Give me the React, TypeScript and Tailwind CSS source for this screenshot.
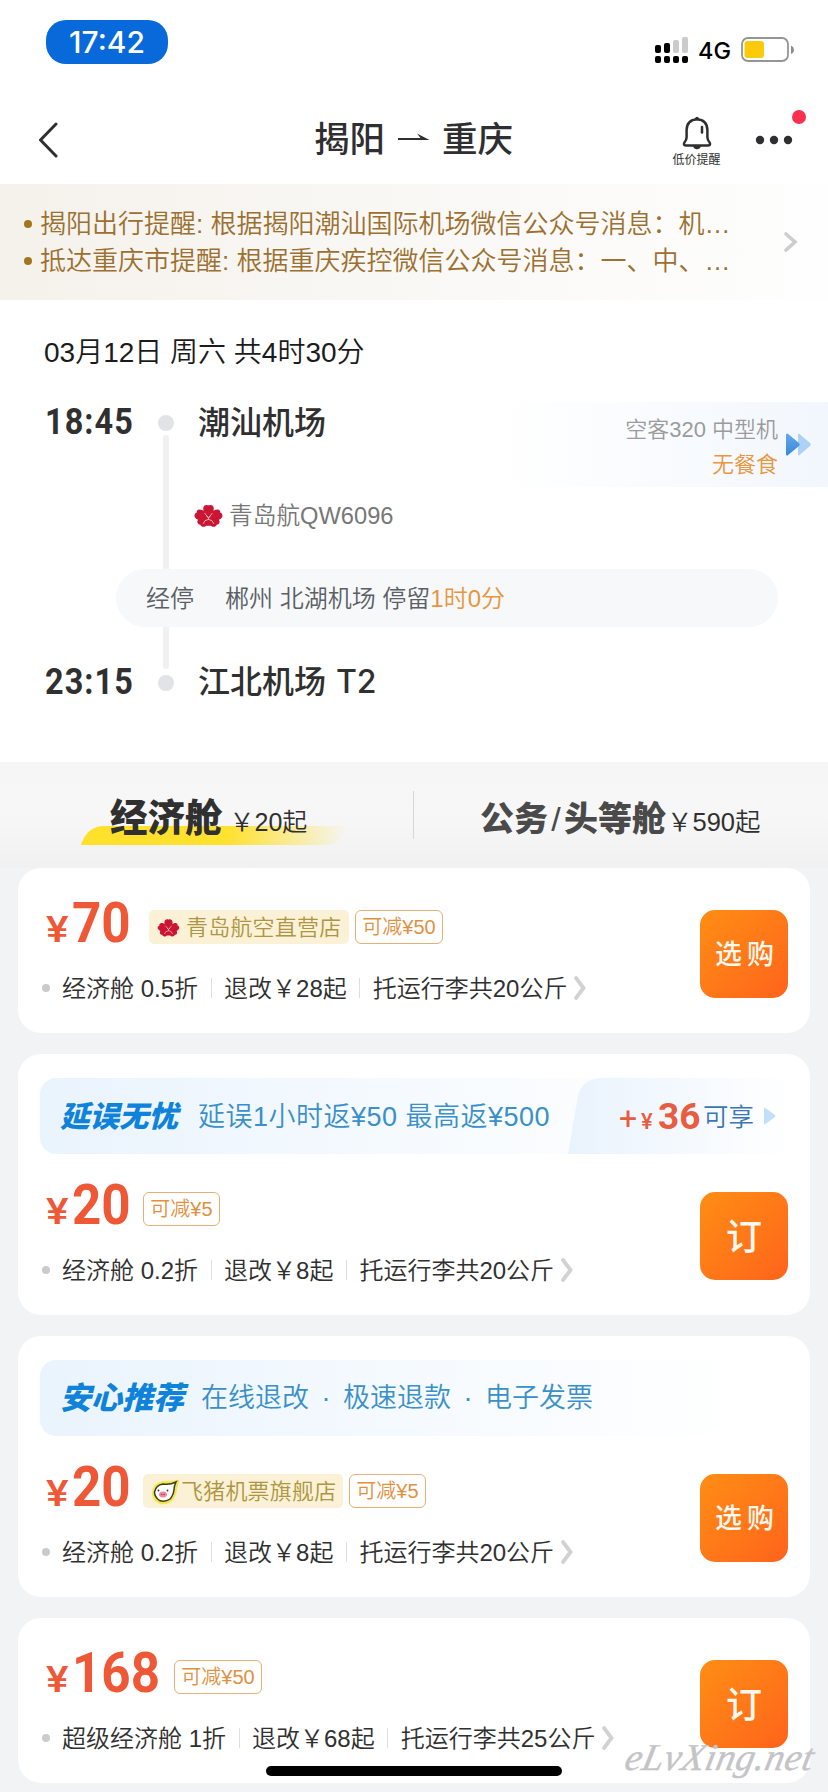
import React from "react";

const sans = "font-['Liberation_Sans','Noto_Sans_CJK_SC',sans-serif]";
const digits = "font-['Roboto','Noto_Sans_CJK_SC',sans-serif] font-bold";

function Petals({ className }: { className: string }) {
  return (
    <svg viewBox="0 0 30 24" className={className}>
      <g fill="#cb1535">
        <path d="M15 13C9.500 9 8.500 4 10.500 1.500C12 .2 14 .3 15 1C16 .3 18 .2 19.500 1.500C21.500 4 20.500 9 15 13Z" />
        <path d="M14 15C13.500 8 8 4.500 4.500 5.500C2.800 6.200 2.600 7.600 3 8.500C1 9 0 11 .8 13C2.500 16.500 9 18 14 15Z" />
        <path d="M16 15C16.500 8 22 4.500 25.500 5.500C27.200 6.200 27.400 7.600 27 8.500C29 9 30 11 29.200 13C27.500 16.500 21 18 16 15Z" />
        <path d="M14.800 13C9 12.500 3 14 3.500 18.500C4 20.500 5.500 21 6.500 21C7.500 23.300 9.500 23.800 12 22.500C14.500 20.500 15 17 14.800 13Z" />
        <path d="M15.200 13C21 12.500 27 14 26.500 18.500C26 20.500 24.500 21 23.500 21C22.500 23.300 20.500 23.800 18 22.500C15.500 20.500 15 17 15.200 13Z" />
        <rect x="8" y="6" width="14" height="16" rx="4" />
      </g>
      <path
        d="M15 14L11 9M15 14L19 9M15 14V16M9.500 20Q10.500 16 15 15.500Q19.500 16 20.500 20M13 12L15 14L17 12"
        fill="none"
        stroke="#f8c4b4"
        strokeWidth="0.9"
      />
    </svg>
  );
}

function Pig({ className }: { className: string }) {
  return (
    <svg viewBox="0 0 30 26" className={className}>
      <path d="M13 2Q21 2.500 28.500 .5Q27 6 26 10Q25 18 21 22Q16 26 9 25Q1 22 1 14Q2 3 13 2Z" fill="#f3e64e" />
      <path
        d="M12 5Q19 6 25 3Q23 7 23 11Q22 17 19 20Q14 23.500 8.500 21.500Q3.500 18 3.500 13Q5 6 12 5Z"
        fill="#fff"
        stroke="#3c3a22"
        strokeWidth="1.500"
      />
      <ellipse cx="12" cy="15.500" rx="4" ry="3" fill="#f08a9b" />
      <circle cx="10.800" cy="15.500" r=".8" fill="#b03050" />
      <circle cx="13.200" cy="15.500" r=".8" fill="#b03050" />
      <circle cx="7.500" cy="11.500" r=".9" fill="#333" />
      <circle cx="16.500" cy="11.500" r=".9" fill="#333" />
    </svg>
  );
}

function StatusBar() {
  return (
    <div className="flex h-[92px] items-start pl-[46px] pr-[34px]">
      <div className="mt-5 flex h-11 w-[122px] items-center justify-center rounded-[20px] bg-[#0769da] font-['Inter',sans-serif] text-[30px] font-medium leading-none text-white">
        17:42
      </div>
      <div className="ml-auto mt-[37px] flex items-start">
        <svg width="34" height="26" viewBox="0 0 34 26">
          <rect x="0" y="8" width="6" height="8" rx="2" />
          <rect x="9" y="6" width="6" height="10" rx="2" />
          <rect x="18" y="3" width="6" height="13" rx="2" fill="#cbcbcb" />
          <rect x="27" y="0" width="6" height="16" rx="2" fill="#cbcbcb" />
          <rect x="0" y="19" width="6" height="7" rx="2" />
          <rect x="9" y="19" width="6" height="7" rx="2" />
          <rect x="18" y="19" width="6" height="7" rx="2" />
          <rect x="27" y="19" width="6" height="7" rx="2" />
        </svg>
        <span className="ml-[9px] mt-[3px] w-[43px] font-['Inter',sans-serif] text-[23.500px] font-medium leading-[22px] text-black">4G</span>
        <svg width="53" height="26" viewBox="0 0 53 26">
          <rect x="1" y="1" width="46" height="23" rx="6" fill="none" stroke="#959595" strokeWidth="1.800" />
          <rect x="3.500" y="4" width="19.500" height="17" rx="3" fill="#fbcb0a" />
          <path d="M50 8.500Q53 10 53 12.500Q53 15.500 50 17Z" fill="#8c8c8c" />
        </svg>
      </div>
    </div>
  );
}

function NavBar() {
  return (
    <div className="flex h-[92px] items-start text-[#2f2f31]">
      <svg width="20" height="36" viewBox="0 0 20 36" className="ml-[38px] mt-[30px]">
        <path d="M18 2L2.500 18L18 34" fill="none" stroke="currentColor" strokeWidth="3" strokeLinecap="round" strokeLinejoin="round" />
      </svg>
      <h1 className={`${sans} ml-[256px] mt-[29px] flex h-10 w-[199px] items-center text-[35.500px] font-medium leading-none`}>
        <span>揭阳</span>
        <svg width="32" height="9" viewBox="0 0 32 9" className="mx-[12.500px] mb-[7px] shrink-0">
          <path d="M0 7H31.500L19 .5L22.500 5H0Z" fill="currentColor" />
        </svg>
        <span>重庆</span>
      </h1>
      <div className="ml-[159px] mt-6 flex w-[49px] flex-col items-center">
        <svg width="30" height="34" viewBox="0 0 30 34">
          <path
            d="M15 3.200Q4.800 4 4.600 14V21.500Q4.500 24 2.400 26.500Q1 29.300 3.800 29.500H26.200Q29 29.300 27.600 26.500Q25.500 24 25.400 21.500V14Q25.200 4 15 3.200Z"
            fill="none"
            stroke="currentColor"
            strokeWidth="2.500"
          />
          <path d="M12.500 3Q15 -1.500 17.500 3Z" fill="currentColor" />
          <path d="M11 30H19Q18 33.300 15 33.300Q12 33.300 11 30Z" fill="currentColor" />
          <path d="M20 11V16.500" stroke="currentColor" strokeWidth="2.500" strokeLinecap="round" />
        </svg>
        <span className={`${sans} mt-[3px] whitespace-nowrap text-[12px] leading-[14px]`}>低价提醒</span>
      </div>
      <svg width="52" height="42" viewBox="0 0 52 42" className="ml-[34px] mt-[17px]">
        <g fill="currentColor">
          <circle cx="5" cy="31" r="4.200" />
          <circle cx="19" cy="31" r="4.200" />
          <circle cx="33" cy="31" r="4.200" />
        </g>
        <circle cx="44" cy="8" r="7" fill="#f9304f" />
      </svg>
    </div>
  );
}

function Notice() {
  const lines = ["揭阳出行提醒: 根据揭阳潮汕国际机场微信公众号消息：机…", "抵达重庆市提醒: 根据重庆疾控微信公众号消息：一、中、…"];
  return (
    <div className={`${sans} flex h-[116px] items-center bg-linear-to-r from-[#f5f2ec] to-[#fefefe] text-[26px] font-[350] text-[#9b7030]`}>
      <ul className="flex w-[780px] flex-col pl-6 pt-px">
        {lines.map((line) => (
          <li key={line} className="flex h-[37px] items-center whitespace-nowrap leading-none">
            <span className="mr-2 h-2 w-2 rounded-full bg-[#a4741f]" />
            {line}
          </li>
        ))}
      </ul>
      <svg width="18" height="22" viewBox="0 0 18 22">
        <path d="M6 3L15 11L6 19" fill="none" stroke="#cdcdcd" strokeWidth="3.600" strokeLinecap="round" />
      </svg>
    </div>
  );
}

function Flight() {
  return (
    <section className={`${sans} h-[462px] font-[350] leading-none`}>
      <div className="flex h-[102px] items-center whitespace-pre pl-11 pt-[3px] text-[28px] text-[#1b1b1b]">03月12日 周六 共4时30分</div>
      <div className="flex h-[85px] items-stretch">
        <div className={`${digits} ml-[45px] flex h-[39px] w-[113px] items-center text-[36px] text-[#303030]`}>
          <span className="origin-left scale-x-90 tracking-[1.200px]">18:45</span>
        </div>
        <div className="flex w-4 flex-col items-center">
          <span className="mt-[13px] h-4 w-4 rounded-full bg-[#e1e3e7]" />
          <span className="mt-1 w-1.5 grow rounded-t-full bg-[#f1f1f2]" />
        </div>
        <div className="ml-6 flex h-[41px] items-center text-[32px] font-medium text-[#303030]">潮汕机场</div>
        <div className="ml-auto flex w-[330px] items-center justify-end bg-linear-to-r from-white to-[#f2f7fd] pr-[17px] text-[22px]">
          <div className="flex flex-col items-end pt-[5px] text-right">
            <span className="flex h-[35px] items-center whitespace-pre text-[#9b9b9b]">空客320 中型机</span>
            <span className="flex h-[35px] items-center text-[#e8963f]">无餐食</span>
          </div>
          <svg width="25" height="23" viewBox="0 0 25 23" className="ml-[8px]">
            <defs>
              <linearGradient id="fast" x1="0" y1="0" x2="0" y2="1">
                <stop offset="0" stopColor="#65a9ec" />
                <stop offset="1" stopColor="#3987d8" />
              </linearGradient>
            </defs>
            <path d="M12 2Q12 0 13.500 1L24 10Q25.500 11.500 24 13L13.500 22Q12 23 12 21Z" fill="#add1f7" />
            <path d="M0 2Q0 0 1.500 .5L13 10Q14.500 11.500 13 13L1.500 22.500Q0 23 0 21Z" fill="url(#fast)" />
          </svg>
        </div>
      </div>
      <div className="flex h-[82px] items-stretch">
        <span className="ml-[163px] w-1.5 bg-[#f1f1f2]" />
        <div className="ml-[25px] flex h-[57px] items-center text-[23.700px] text-[#777777]">
          <Petals className="mr-[6px] h-6 w-[29px]" />
          <span className="pt-[3px]">青岛航QW6096</span>
        </div>
      </div>
      <div className="ml-[116px] flex h-[58px] w-[662px] items-center whitespace-pre rounded-full bg-[#f6f8fa] pl-[30px] pt-[2px] text-[24px] text-[#5b5f66]">
        <span className="w-[79px]">经停</span>
        <span>郴州 北湖机场 停留</span>
        <span className="text-[#e8963f]">1时0分</span>
      </div>
      <div className="flex h-[135px] items-start">
        <div className={`${digits} ml-[45px] mt-[35px] flex h-[39px] w-[113px] items-center text-[36px] text-[#303030]`}>
          <span className="origin-left scale-x-90 tracking-[1.200px]">23:15</span>
        </div>
        <div className="flex w-4 flex-col items-center">
          <span className="h-[42px] w-1.5 rounded-b-full bg-[#f1f1f2]" />
          <span className="mt-[6px] h-4 w-4 rounded-full bg-[#e1e3e7]" />
        </div>
        <div className="ml-6 mt-[34px] flex h-[41px] items-center whitespace-pre text-[32px] font-medium text-[#303030]">
          江北机场 <span className="ml-px font-['Inter',sans-serif] text-[32px] font-medium">T2</span>
        </div>
      </div>
    </section>
  );
}

function CabinTabs() {
  return (
    <div className={`${sans} flex h-[106px] bg-linear-to-b from-[#f6f6f6] via-[#f7f7f7] to-[#f1f1f2] leading-none`}>
      <div className="relative flex w-[413px] items-start pl-[110px] pt-[35px]">
        <svg width="268" height="20" viewBox="0 0 268 20" className="absolute left-[80px] top-[64px]">
          <defs>
            <linearGradient id="swoosh" x1="0" x2="1">
              <stop offset="0" stopColor="#ffe12b" />
              <stop offset=".55" stopColor="#ffe12f" />
              <stop offset="1" stopColor="#ffe12f" stopOpacity="0" />
            </linearGradient>
          </defs>
          <path d="M1 19Q7 0 24 0H268Q260 19 244 19Z" fill="url(#swoosh)" />
        </svg>
        <span className="relative flex h-[43px] items-center text-[37.500px] font-black text-[#303030]">经济舱</span>
        <span className="relative ml-[7px] flex h-[51px] items-center text-[25px] font-[350] text-[#303030]">￥20起</span>
      </div>
      <span className="mt-[29px] h-12 w-px bg-[#d6d6d6]" />
      <div className="flex items-start pl-[66px] pt-[35px]">
        <span className="flex h-[43px] items-center text-[34px] font-black text-[#4a4a4a]">
          公务<span className="w-4 text-center font-normal">/</span>头等舱
        </span>
        <span className="ml-px flex h-[51px] items-center text-[25.500px] font-[350] text-[#303030]">￥590起</span>
      </div>
    </div>
  );
}

function Tick() {
  return <span className="mx-[12.500px] h-5 w-px bg-[#dedede]" />;
}

type Fare = {
  price: string;
  gap: string;
  shop?: { name: string; icon: React.ReactNode };
  cut: string;
  details: string[];
  action: string;
  banner?: React.ReactNode;
};

function FareCard({ fare }: { fare: Fare }) {
  return (
    <article className="mx-[18px] rounded-[23px] bg-white">
      {fare.banner && <div className="h-24 px-[22px] pt-6">{fare.banner}</div>}
      <div className="flex h-[165px] pl-7 pr-[22px]">
        <div className="flex grow flex-col">
          <div className="flex h-[100px] items-start">
            <div className={`${digits} mt-[25px] flex items-baseline text-[#ef5837]`}>
              <span className="w-[26px] origin-left scale-x-115 text-[37px] font-medium leading-none">¥</span>
              <span className={`origin-left scale-x-93 text-[55px] leading-[60px] ${fare.price.length > 2 ? "w-[94px]" : "w-[60px]"}`}>{fare.price}</span>
            </div>
            <div className={`${fare.gap} mt-[42px] flex gap-1.5 leading-none`}>
              {fare.shop && (
                <div className="flex h-[34px] w-[200px] items-center rounded-[5px] bg-[#fbf1d6] pl-2 pt-px text-[22px] font-[350] tracking-[0.200px] text-[#ac9642]">
                  {fare.shop.icon}
                  {fare.shop.name}
                </div>
              )}
              <div className="flex h-[34px] items-center rounded-[6px] border border-[#e6b077] px-[6.300px] text-[20px] font-[350] text-[#e0913f]">{fare.cut}</div>
            </div>
          </div>
          <div className="flex h-10 items-center whitespace-nowrap text-[24px] font-[350] leading-none text-[#303030]">
            <span className="-ml-1 mr-[12px] h-2 w-2 rounded-full bg-[#cbcbcb]" />
            {fare.details.map((text, i) => (
              <React.Fragment key={text}>
                {i > 0 && <Tick />}
                <span className="pt-[2px]">{text}</span>
              </React.Fragment>
            ))}
            <svg width="16" height="26" viewBox="0 0 16 26" className="ml-1">
              <path d="M5 3L12.500 13L5 23" fill="none" stroke="#d2d2d2" strokeWidth="3.800" strokeLinecap="round" />
            </svg>
          </div>
        </div>
        <button
          className={`mt-[42px] flex h-[88px] w-[88px] shrink-0 items-center justify-center rounded-[15px] bg-linear-to-br from-[#ff8d14] to-[#ff631b] font-medium leading-none text-[#fff8ee] ${
            fare.action.length > 1 ? "pl-1.5 pt-0.5 text-[27px] tracking-[5px]" : "pt-1 text-[36px]"
          }`}
        >
          {fare.action}
        </button>
      </div>
    </article>
  );
}

const delayBanner = (
  <div className="relative flex h-[76px] w-[746px] items-center whitespace-pre rounded-l-[16px] bg-linear-to-r from-[#eaf4fd] to-white to-90% pl-5 leading-none">
    <svg width="222" height="76" viewBox="0 0 222 76" className="absolute left-[528px] top-0">
      <defs>
        <linearGradient id="tab" x1="0" x2="1">
          <stop offset="0" stopColor="#e9f3fd" />
          <stop offset="1" stopColor="#ffffff" />
        </linearGradient>
      </defs>
      <path d="M0 76L10 18Q14 0 36 0H222V76Z" fill="url(#tab)" />
    </svg>
    <span className="w-[138px] pt-0.5 text-[29.500px] font-black italic text-[#0f82da]">延误无忧</span>
    <span className="w-[421px] pt-0.5 text-[27px] font-[350] tracking-[0.500px] text-[#3a90c8]">延误1小时返¥50 最高返¥500</span>
    <div className={`${digits} relative flex items-baseline text-[#e85d41]`}>
      <span className="w-[22px] text-[32px] font-normal">+</span>
      <span className="w-[17px] text-[22px] font-medium">¥</span>
      <span className="w-[45px] text-[37px]">36</span>
    </div>
    <span className="relative pt-[3px] text-[25.500px] font-[350] text-[#3a77b4]">可享</span>
    <svg width="12" height="18" viewBox="0 0 12 18" className="relative ml-[10px]">
      <path d="M0 1.500Q0 0 1.500 1L11 8Q12 9 11 10L1.500 17Q0 18 0 16.500Z" fill="#c3e0fa" />
    </svg>
  </div>
);

const serviceBanner = (
  <div className="flex h-[76px] w-[700px] items-center rounded-l-[16px] bg-linear-to-r from-[#eaf4fd] to-white pl-5 leading-none">
    <span className="w-[141px] pt-px text-[31px] font-black italic text-[#0f82da]">安心推荐</span>
    <div className="flex pt-px text-[27px] font-[350] text-[#3a90c8]">
      <span>在线退改</span>
      <span className="w-[34px] text-center">·</span>
      <span>极速退款</span>
      <span className="w-[34px] text-center">·</span>
      <span>电子发票</span>
    </div>
  </div>
);

const fares: Fare[] = [
  {
    price: "70",
    gap: "ml-[17px]",
    shop: { name: "青岛航空直营店", icon: <Petals className="mr-[6px] h-[18px] w-[23px]" /> },
    cut: "可减¥50",
    details: ["经济舱 0.5折", "退改￥28起", "托运行李共20公斤"],
    action: "选购",
  },
  {
    price: "20",
    gap: "ml-[11px]",
    cut: "可减¥5",
    details: ["经济舱 0.2折", "退改￥8起", "托运行李共20公斤"],
    action: "订",
    banner: delayBanner,
  },
  {
    price: "20",
    gap: "ml-[11px]",
    shop: { name: "飞猪机票旗舰店", icon: <Pig className="h-[26px] w-[30px]" /> },
    cut: "可减¥5",
    details: ["经济舱 0.2折", "退改￥8起", "托运行李共20公斤"],
    action: "选购",
    banner: serviceBanner,
  },
  {
    price: "168",
    gap: "ml-[8px]",
    cut: "可减¥50",
    details: ["超级经济舱 1折", "退改￥68起", "托运行李共25公斤"],
    action: "订",
  },
];

export default function App() {
  return (
    <div className="relative h-[1792px] w-[828px] overflow-hidden bg-white">
      <StatusBar />
      <NavBar />
      <Notice />
      <Flight />
      <main className={`${sans} h-[1030px] bg-[#f1f3f5]`}>
        <CabinTabs />
        <div className="flex flex-col gap-[21px]">
          {fares.map((fare, i) => (
            <FareCard key={i} fare={fare} />
          ))}
        </div>
      </main>
      <div className="absolute left-[266px] top-[1766px] h-[10px] w-[296px] rounded-full bg-black" />
      <div className="absolute left-[626px] top-[1735px] -skew-x-12 whitespace-nowrap font-['Liberation_Serif',cursive] text-[38px] italic leading-[44px] tracking-[0.500px] text-[#c4c4c7] [-webkit-text-stroke:0.4px_#c4c4c7]">
        eLvXing.net
      </div>
    </div>
  );
}
